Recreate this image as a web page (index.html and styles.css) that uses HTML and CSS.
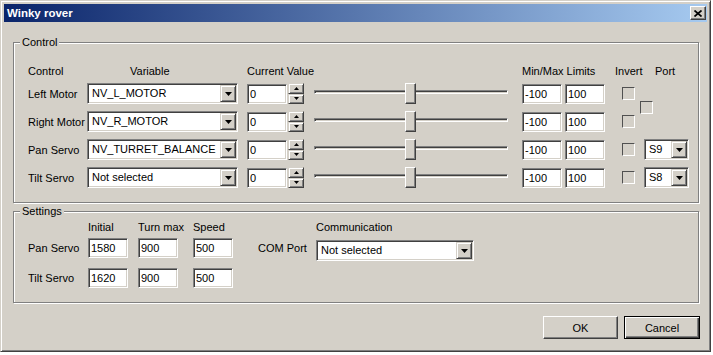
FILE: index.html
```html
<!DOCTYPE html>
<html lang="en">
<head>
  <meta charset="UTF-8" />
  <title>Winky rover</title>
  <link rel="stylesheet" href="styles.css">
</head>
<body>
  <div class="window">
    <div class="titlebar">
      <span class="title">Winky rover</span>
      <button class="close-btn" title="Close">
        <svg width="8" height="7" viewBox="0 0 8 7"><path d="M0.5 0.5 L7.5 6.5 M7.5 0.5 L0.5 6.5" stroke="#000" stroke-width="1.7"/></svg>
      </button>
    </div>

    <div class="client">
      <fieldset class="group">
        <legend>Control</legend>

        <div class="ctl-cols ctl-head">
          <span>Control</span>
          <span class="head-var">Variable</span>
          <span>Current Value</span>
          <span></span>
          <span>Min/Max Limits</span>
          <span class="head-invert">Invert</span>
          <span class="head-port">Port</span>
        </div>

        <div class="ctl-cols ctl-rows">
          <!-- Left motor -->
          <span class="lbl">Left Motor</span>
          <div class="combo"><span class="combo-text">NV_L_MOTOR</span><span class="combo-btn"><svg width="7" height="4"><polygon points="0,0 7,0 3.5,4" fill="#000"/></svg></span></div>
          <div class="spin-field">
            <input class="edit edit-value" value="0">
            <div class="spin">
              <span class="spin-btn"><svg width="5" height="3"><polygon points="2.5,0 5,3 0,3" fill="#000"/></svg></span>
              <span class="spin-btn"><svg width="5" height="3"><polygon points="0,0 5,0 2.5,3" fill="#000"/></svg></span>
            </div>
          </div>
          <div class="slider"><div class="track"></div><div class="thumb"></div></div>
          <div class="limits"><input class="edit" value="-100"><input class="edit" value="100"></div>
          <span class="check"></span>
          <span class="check check-port"></span>

          <!-- Right motor -->
          <span class="lbl">Right Motor</span>
          <div class="combo"><span class="combo-text">NV_R_MOTOR</span><span class="combo-btn"><svg width="7" height="4"><polygon points="0,0 7,0 3.5,4" fill="#000"/></svg></span></div>
          <div class="spin-field">
            <input class="edit edit-value" value="0">
            <div class="spin">
              <span class="spin-btn"><svg width="5" height="3"><polygon points="2.5,0 5,3 0,3" fill="#000"/></svg></span>
              <span class="spin-btn"><svg width="5" height="3"><polygon points="0,0 5,0 2.5,3" fill="#000"/></svg></span>
            </div>
          </div>
          <div class="slider"><div class="track"></div><div class="thumb"></div></div>
          <div class="limits"><input class="edit" value="-100"><input class="edit" value="100"></div>
          <span class="check"></span>

          <!-- Pan servo -->
          <span class="lbl">Pan Servo</span>
          <div class="combo"><span class="combo-text">NV_TURRET_BALANCE</span><span class="combo-btn"><svg width="7" height="4"><polygon points="0,0 7,0 3.5,4" fill="#000"/></svg></span></div>
          <div class="spin-field">
            <input class="edit edit-value" value="0">
            <div class="spin">
              <span class="spin-btn"><svg width="5" height="3"><polygon points="2.5,0 5,3 0,3" fill="#000"/></svg></span>
              <span class="spin-btn"><svg width="5" height="3"><polygon points="0,0 5,0 2.5,3" fill="#000"/></svg></span>
            </div>
          </div>
          <div class="slider"><div class="track"></div><div class="thumb"></div></div>
          <div class="limits"><input class="edit" value="-100"><input class="edit" value="100"></div>
          <span class="check"></span>
          <div class="combo combo-port"><span class="combo-text">S9</span><span class="combo-btn"><svg width="7" height="4"><polygon points="0,0 7,0 3.5,4" fill="#000"/></svg></span></div>

          <!-- Tilt servo -->
          <span class="lbl">Tilt Servo</span>
          <div class="combo"><span class="combo-text">Not selected</span><span class="combo-btn"><svg width="7" height="4"><polygon points="0,0 7,0 3.5,4" fill="#000"/></svg></span></div>
          <div class="spin-field">
            <input class="edit edit-value" value="0">
            <div class="spin">
              <span class="spin-btn"><svg width="5" height="3"><polygon points="2.5,0 5,3 0,3" fill="#000"/></svg></span>
              <span class="spin-btn"><svg width="5" height="3"><polygon points="0,0 5,0 2.5,3" fill="#000"/></svg></span>
            </div>
          </div>
          <div class="slider"><div class="track"></div><div class="thumb"></div></div>
          <div class="limits"><input class="edit" value="-100"><input class="edit" value="100"></div>
          <span class="check"></span>
          <div class="combo combo-port"><span class="combo-text">S8</span><span class="combo-btn"><svg width="7" height="4"><polygon points="0,0 7,0 3.5,4" fill="#000"/></svg></span></div>
        </div>
      </fieldset>

      <fieldset class="group settings">
        <legend>Settings</legend>

        <div class="set-cols set-head">
          <span></span>
          <span>Initial</span>
          <span>Turn max</span>
          <span>Speed</span>
          <span></span>
          <span>Communication</span>
        </div>

        <div class="set-cols set-rows">
          <span class="lbl">Pan Servo</span>
          <input class="edit" value="1580">
          <input class="edit" value="900">
          <input class="edit" value="500">
          <span class="lbl">COM Port</span>
          <div class="combo combo-com"><span class="combo-text">Not selected</span><span class="combo-btn"><svg width="7" height="4"><polygon points="0,0 7,0 3.5,4" fill="#000"/></svg></span></div>

          <span class="lbl">Tilt Servo</span>
          <input class="edit" value="1620">
          <input class="edit" value="900">
          <input class="edit" value="500">
        </div>
      </fieldset>

      <div class="buttons">
        <button class="btn">OK</button>
        <button class="btn btn-default">Cancel</button>
      </div>
    </div>
  </div>
</body>
</html>
```

FILE: styles.css
```css
body {
  margin: 0;
  background: #fff;
  font-family: "Liberation Sans", Arial, sans-serif;
  font-size: 11px;
  color: #000;
}

/* window frame */
.window {
  width: 711px;
  height: 352px;
  box-sizing: border-box;
  background: #d4d0c8;
  border: 1px solid;
  border-color: #d4d0c8 #404040 #404040 #d4d0c8;
  box-shadow: inset 1px 1px #fff, inset -1px -1px #808080;
  padding: 3px;
  display: flex;
  flex-direction: column;
}

.titlebar {
  height: 18px;
  flex-shrink: 0;
  display: flex;
  align-items: center;
  justify-content: space-between;
  padding: 0 1px 0 3px;
  background: linear-gradient(to right, #0a246a, #a6caf0);
}

.title {
  color: #fff;
  font-weight: bold;
  font-size: 11.5px;
}

.close-btn {
  width: 16px;
  height: 14px;
  padding: 0;
  box-sizing: border-box;
  background: #d4d0c8;
  border: 1px solid;
  border-color: #fff #404040 #404040 #fff;
  box-shadow: inset -1px -1px #808080;
  display: flex;
  align-items: center;
  justify-content: center;
}

.client {
  flex: 1;
  display: flex;
  flex-direction: column;
}

/* group boxes */
.group {
  margin: 14px 8px 0 9px;
  padding: 16px 0 14px 0;
  border: 1px solid #808080;
  box-shadow: 1px 1px #fff, inset 1px 1px #fff;
  min-width: 0;
}

.group legend {
  margin-left: 6px;
  padding: 0 2px;
  line-height: 13px;
  background: #d4d0c8;
}

.settings {
  margin-top: 2px;
  padding-top: 3px;
}

/* control grid */
.ctl-cols {
  display: grid;
  grid-template-columns: 59px 160px 63px 212px 100px 22px 45px;
  padding-left: 14px;
  white-space: nowrap;
}

.ctl-head {
  line-height: 13px;
  margin-bottom: 5px;
}

.head-var {
  padding-left: 43px;
}

.head-invert {
  margin-left: -7px;
}

.head-port {
  padding-left: 11px;
}

.ctl-rows {
  grid-template-rows: repeat(4, 21px);
  row-gap: 7px;
  align-items: center;
}

/* combo box */
.combo {
  box-sizing: border-box;
  width: 151px;
  height: 21px;
  background: #fff;
  border: 1px solid;
  border-color: #808080 #fff #fff #808080;
  box-shadow: inset 1px 1px #404040, inset -1px -1px #d4d0c8;
  padding: 1px;
  display: flex;
  align-items: stretch;
}

.combo-text {
  flex: 1;
  padding-left: 3px;
  line-height: 17px;
  overflow: hidden;
}

.combo-btn {
  width: 16px;
  box-sizing: border-box;
  background: #d4d0c8;
  border: 1px solid;
  border-color: #d4d0c8 #404040 #404040 #d4d0c8;
  box-shadow: inset 1px 1px #fff, inset -1px -1px #808080;
  display: flex;
  align-items: center;
  justify-content: center;
}

.combo-port {
  width: 45px;
}

.combo-com {
  width: 158px;
  align-self: start;
  margin-top: 2px;
}

/* edits */
.edit {
  box-sizing: border-box;
  width: 40px;
  height: 20px;
  margin: 0;
  padding: 0 2px;
  font: inherit;
  color: #000;
  background: #fff;
  border: 1px solid;
  border-color: #808080 #fff #fff #808080;
  box-shadow: inset 1px 1px #404040, inset -1px -1px #d4d0c8;
  outline: none;
}

.spin-field {
  display: flex;
  align-items: center;
}

.spin {
  width: 16px;
  height: 21px;
  margin-left: 1px;
  display: flex;
  flex-direction: column;
}

.spin-btn {
  flex: 1;
  box-sizing: border-box;
  background: #d4d0c8;
  border: 1px solid;
  border-color: #d4d0c8 #404040 #404040 #d4d0c8;
  box-shadow: inset 1px 1px #fff, inset -1px -1px #808080;
  display: flex;
  align-items: center;
  justify-content: center;
}

/* slider */
.slider {
  position: relative;
  width: 194px;
  height: 21px;
  margin-left: 4px;
  display: flex;
  align-items: center;
}

.track {
  width: 100%;
  height: 4px;
  margin-top: -3px;
  box-sizing: border-box;
  border: 1px solid;
  border-color: #808080 #fff #fff #808080;
  box-shadow: inset 1px 1px #404040;
}

.thumb {
  position: absolute;
  left: 91px;
  top: 0;
  width: 11px;
  height: 21px;
  box-sizing: border-box;
  background: #d4d0c8;
  border: 1px solid;
  border-color: #fff #404040 #404040 #fff;
  box-shadow: inset -1px -1px #808080;
}

.limits {
  display: flex;
  gap: 3px;
}

.check {
  width: 13px;
  height: 13px;
  box-sizing: border-box;
  border: 1px solid;
  border-color: #505050 #fff #fff #505050;
}

.check-port {
  grid-row: span 2;
  margin-left: -4px;
}

/* settings grid */
.set-cols {
  display: grid;
  grid-template-columns: 60px 50px 55px 65px 58px 160px;
  padding-left: 14px;
  white-space: nowrap;
}

.set-head {
  line-height: 13px;
  margin-bottom: 4px;
}

.set-rows {
  grid-template-rows: 20px 20px;
  row-gap: 10px;
  align-items: center;
}

/* dialog buttons */
.buttons {
  display: flex;
  justify-content: flex-end;
  gap: 6px;
  margin-top: 13px;
  padding-right: 7px;
}

.btn {
  width: 75px;
  height: 23px;
  box-sizing: border-box;
  padding: 0;
  font: inherit;
  color: #000;
  background: #d4d0c8;
  border: 1px solid;
  border-color: #fff #404040 #404040 #fff;
  box-shadow: inset -1px -1px #808080;
}

.btn-default {
  width: 76px;
  border-color: #000;
  box-shadow: inset 1px 1px #fff, inset -1px -1px #404040, inset -2px -2px #808080;
}
```
